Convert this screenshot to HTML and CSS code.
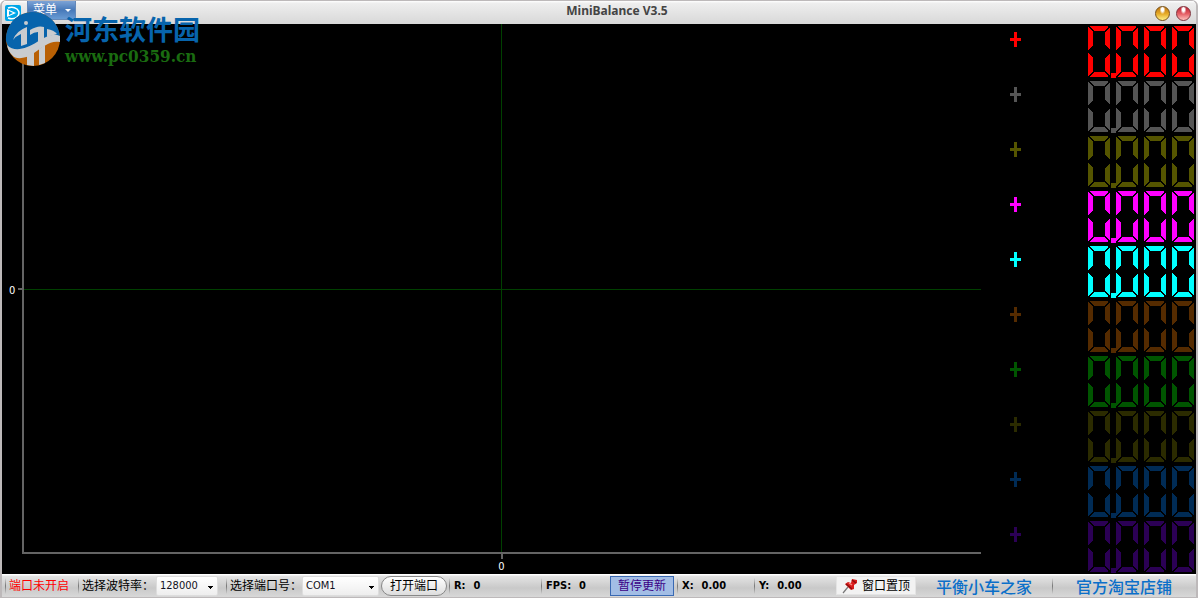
FILE: index.html
```html
<!DOCTYPE html>
<html lang="zh-CN">
<head>
<meta charset="utf-8">
<title>MiniBalance V3.5</title>
<link rel="stylesheet" href="styles.css">
</head>
<body>
<svg class="defs" aria-hidden="true">
  <defs>
    <g id="zero" shape-rendering="crispEdges">
      <path d="M2 0H20V1L16 5H6L2 1Z"/>
      <path d="M0 1 5 6V19L0 24Z"/>
      <path d="M22 1 17 6V19L22 24Z"/>
      <path d="M0 27 5 32V45L0 50Z"/>
      <path d="M22 27 17 32V45L22 50Z"/>
      <path d="M6 46H16L20 50V51H2V50Z"/>
    </g>
    <symbol id="readout" viewBox="0 0 106 52">
      <use href="#zero"/><use href="#zero" x="28"/><use href="#zero" x="56"/><use href="#zero" x="84"/>
      <rect x="23" y="47" width="5" height="5"/>
    </symbol>
  </defs>
</svg>
<div class="window">
  <header class="titlebar">
    <svg class="app-icon" viewBox="0 0 16 16" aria-hidden="true"><rect width="16" height="16" rx="2" fill="#00a6e8"/><path d="M3 3Q8 1 12 4Q16 8 12 12Q8 15 3 13" fill="none" stroke="#fff" stroke-width="1.500"/><path d="M2 4 11 8 2 12Z" fill="#fff"/><path d="M4 6 8 8 4 10Z" fill="#00a6e8"/></svg>
    <button class="menu" type="button">菜单<span class="menu-arrow"></span></button>
    <h1 class="title">MiniBalance V3.5</h1>
    <button class="orb amber" type="button" aria-label="最小化"></button>
    <button class="orb red" type="button" aria-label="关闭"></button>
  </header>
  <main class="scope">
    <section class="plot">
      <span class="y-label">0</span>
      <div class="axes"><i class="h-line"></i><i class="v-line"></i><i class="y-tick"></i><i class="x-tick"></i></div>
      <span class="x-label">0</span>
    </section>
    <ul class="channels">
      <li class="c1"><i class="plus"></i><svg class="digits" role="img" aria-label="0.000"><use href="#readout"/></svg></li>
      <li class="c2"><i class="plus"></i><svg class="digits" role="img" aria-label="0.000"><use href="#readout"/></svg></li>
      <li class="c3"><i class="plus"></i><svg class="digits" role="img" aria-label="0.000"><use href="#readout"/></svg></li>
      <li class="c4"><i class="plus"></i><svg class="digits" role="img" aria-label="0.000"><use href="#readout"/></svg></li>
      <li class="c5"><i class="plus"></i><svg class="digits" role="img" aria-label="0.000"><use href="#readout"/></svg></li>
      <li class="c6"><i class="plus"></i><svg class="digits" role="img" aria-label="0.000"><use href="#readout"/></svg></li>
      <li class="c7"><i class="plus"></i><svg class="digits" role="img" aria-label="0.000"><use href="#readout"/></svg></li>
      <li class="c8"><i class="plus"></i><svg class="digits" role="img" aria-label="0.000"><use href="#readout"/></svg></li>
      <li class="c9"><i class="plus"></i><svg class="digits" role="img" aria-label="0.000"><use href="#readout"/></svg></li>
      <li class="c10"><i class="plus"></i><svg class="digits" role="img" aria-label="0.000"><use href="#readout"/></svg></li>
    </ul>
  </main>
  <footer class="status">
    <span class="cell port-state">端口未开启</span>
    <div class="cell baud"><label for="baud">选择波特率：</label><select id="baud"><option>128000</option></select></div>
    <div class="cell port"><label for="port">选择端口号：</label><select id="port"><option>COM1</option></select><button class="open" type="button">打开端口</button></div>
    <span class="cell stat rate"><span>R:</span><span>0</span></span>
    <span class="cell stat fps"><span>FPS:</span><span>0</span></span>
    <button class="pause" type="button">暂停更新</button>
    <span class="cell stat x-pos"><span>X:</span><span>0.00</span></span>
    <span class="cell stat y-pos"><span>Y:</span><span>0.00</span></span>
    <button class="pin" type="button"><svg viewBox="0 0 16 16" aria-hidden="true"><path d="M1 15 6 9" stroke="#777" stroke-width="1.200"/><path d="M3 6 6 4 9 5 10 1 15 2 15 5 12 7 12 11 9 12Z" fill="#d91c1c"/><path d="M4 6 10 11M10 2 14 5" stroke="#8f0d0d" stroke-width="1.500"/><path d="M7 5 10 7" stroke="#ff8a80" stroke-width="1.500"/></svg>窗口置顶</button>
    <a class="home" href="#home">平衡小车之家</a>
    <a class="cell shop" href="#shop">官方淘宝店铺</a>
  </footer>
  <div class="watermark">
    <svg viewBox="0 0 56 56" aria-hidden="true">
      <circle cx="28" cy="28" r="27" fill="#b96004"/>
      <path d="M1 30A27 27 0 0 1 55 26C47 25 39 33 31 38C21 44 10 45 5 41Z" fill="#0764ac"/>
      <path d="M2 34C10 42 22 37 32 31C42 25 48 22 55 25V31C45 29 38 36 29 42C20 48 11 49 7 44Q3 40 2 34Z" fill="#c9cccf"/>
      <path d="M8 29Q11 20 22 16V33L16 35V23Q11 25 8 29ZM25 19Q33 14 39 16V29L33 32V21Q29 21 25 24Z" fill="#c9cccf"/>
      <path d="M42 18Q49 19 52 23L42 26Z" fill="#c9cccf"/>
      <path d="M22 44 29 41V55L22 54ZM34 38 40 34V52L34 54Z" fill="#c9cccf"/>
      <circle cx="21" cy="12" r="2" fill="#c9cccf"/>
    </svg>
    <div><strong>河东软件园</strong><span>www.pc0359.cn</span></div>
  </div>
</div>
</body>
</html>
```

FILE: styles.css
```css
* { box-sizing: border-box; }
html, body { height: 100%; margin: 0; }
body { background: #fff; color: #000; font: 12px/16px "Noto Sans", "Noto Sans CJK SC", sans-serif; }
button, select { font: inherit; }
.defs { position: absolute; width: 0; height: 0; }
.window { position: relative; display: flex; flex-direction: column; height: 100%; overflow: hidden; border: 2px solid #bdb9ba; border-top-width: 1px; border-bottom-width: 1px; border-radius: 6px 6px 0 0; }
.titlebar { display: flex; align-items: center; flex: none; height: 23px; padding: 0 4px 0 3px; background: linear-gradient(#fff, #eee 10%, #d8d8d8); }
.app-icon { flex: none; width: 16px; height: 16px; }
.menu { display: flex; align-items: center; gap: 8px; align-self: flex-start; height: 19px; margin-left: 6px; padding: 0 4px 0 5px; border: 1px solid #6488b8; border-top: 0; border-radius: 0 0 3px 3px; background: linear-gradient(#7da3d6, #4779b9 50%, #689bd4); color: #fff; }
.menu-arrow { border: 3px solid transparent; border-top-color: #fff; border-bottom: 0; }
.title { flex: 1; margin: 0; padding: 0 0 4px 8px; color: #444; text-align: center; font: bold 12px/16px "Noto Sans", sans-serif; }
.orb { width: 15px; height: 15px; margin: 1px 1px 0 5px; padding: 0; border: 1px solid; border-radius: 50%; }
.amber { border-color: #765018; background: radial-gradient(ellipse at 50% 20%, #fff 0 12%, transparent 32%), linear-gradient(#bb7415, #e5a824 50%, #fff087); }
.red { border-color: #80313b; background: radial-gradient(ellipse at 50% 20%, #fff 0 12%, transparent 32%), linear-gradient(#bd2333, #e35b62 50%, #ffc2bd); }
.scope { display: flex; flex: 1; min-height: 0; background: #000; }
.plot { display: grid; flex: 1; grid-template: 1fr 20px / 20px 1fr; color: #fff; font: 11px/16px "DejaVu Sans Condensed", "DejaVu Sans", sans-serif; }
.y-label { align-self: center; padding: 4px 0 0 7px; }
.axes { position: relative; border-left: 2px solid #646464; border-bottom: 2px solid #646464; }
.h-line, .v-line, .y-tick, .x-tick { position: absolute; }
.h-line { left: 0; right: 0; bottom: 50%; height: 1px; margin-bottom: -2px; background: #004000; }
.v-line { top: 0; bottom: 0; right: 50%; width: 1px; margin-right: 1px; background: #004000; }
.y-tick { top: 50%; left: -6px; width: 4px; height: 2px; background: #646464; }
.x-tick { top: 100%; right: 50%; width: 2px; height: 5px; margin-top: 2px; background: #646464; }
.x-label { grid-column: 2; padding-top: 5px; text-align: center; }
.channels { display: grid; grid-template-rows: repeat(10, 1fr); flex: none; width: 215px; margin: 0; padding: 0 2px 0 29px; list-style: none; }
.channels li { display: flex; justify-content: space-between; min-height: 0; padding-top: 2px; color: var(--c); }
.plus { width: 11px; height: 15px; margin-top: 6px; background: linear-gradient(var(--c), var(--c)) 4px 0 / 3px 15px no-repeat, linear-gradient(var(--c), var(--c)) 0 6px / 11px 3px no-repeat; }
.digits { width: 106px; height: 52px; fill: var(--c); }
.c1 { --c: #f00; } .c2 { --c: #555; } .c3 { --c: #550; } .c4 { --c: #f0f; } .c5 { --c: #0ff; }
.c6 { --c: #552b00; } .c7 { --c: #050; } .c8 { --c: #2b2b00; } .c9 { --c: #002b55; } .c10 { --c: #2b0055; }
.status { display: flex; align-items: center; flex: none; height: 23px; padding: 0 3px; background: linear-gradient(#fff 0 1px, #e4e4e4 2px, #c9c9c9 14px, #d8d8d8); white-space: nowrap; }
.cell { display: flex; align-items: center; flex: none; height: 21px; padding-left: 4px; background: linear-gradient(transparent, #777, transparent) 0 50% / 1px 16px no-repeat; }
.port-state { width: 73px; color: #f00; }
.baud { width: 148px; }
.baud label { width: 74px; }
.port label { width: 72px; }
select { width: 62px; height: 20px; padding: 0 3px; border: 1px solid #ddd; border-radius: 2px; appearance: none; color: #112; font: 11px/16px "DejaVu Sans Condensed", "DejaVu Sans", sans-serif; background: linear-gradient(#000, #000) right 4px top 9px / 5px 1px no-repeat, linear-gradient(#000, #000) right 5px top 10px / 3px 1px no-repeat, linear-gradient(#000, #000) right 6px top 11px / 1px 1px no-repeat, linear-gradient(#fff, #eee); }
.port select { width: 77px; }
.open { height: 20px; margin-left: 2px; padding: 0 8px; border: 1px solid #888; border-radius: 10px; background: linear-gradient(#fff, #ddd); line-height: 16px; }
.port { width: 223px; }
.stat { gap: 8px; padding-left: 5px; font: bold 11px/16px "DejaVu Sans Condensed", "DejaVu Sans", sans-serif; }
.rate { width: 92px; }
.fps { width: 69px; }
.pause { height: 20px; padding: 0 7px; border: 1px solid #3969b3; background: #a2bde5; color: #3c0086; line-height: 16px; }
.x-pos { width: 77px; margin-left: 3px; }
.y-pos { width: 82px; }
.pin { display: flex; align-items: center; gap: 4px; height: 19px; padding: 0 5px; border: 1px solid #e4e4e4; background: #f2f2f2; }
.pin svg { width: 16px; height: 16px; }
.home, .shop { color: #0b6fc9; font: 500 16px/20px "Noto Sans CJK SC", sans-serif; text-decoration: none; }
.home { margin-left: 20px; }
.shop { margin-left: 20px; padding-left: 24px; }
.watermark { position: absolute; top: 10px; left: 3px; display: flex; gap: 4px; pointer-events: none; }
.watermark svg { width: 56px; height: 56px; }
.watermark div { display: flex; flex-direction: column; padding-top: 3px; }
.watermark strong { color: #0764ac; font: bold 27px/30px "Noto Sans CJK SC", sans-serif; }
.watermark span { color: #1a6b10; font: bold 17px/24px "DejaVu Serif Condensed", "DejaVu Serif", serif; }
```
